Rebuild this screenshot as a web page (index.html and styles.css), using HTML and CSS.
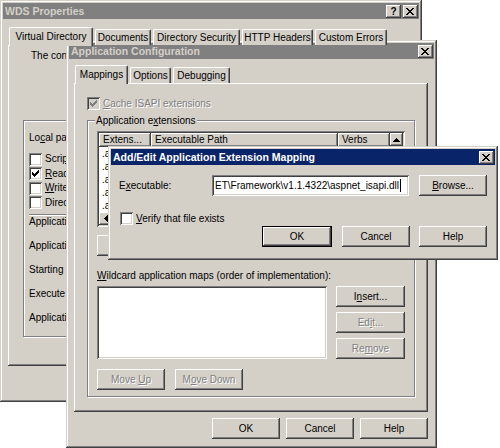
FILE: index.html
```html
<!DOCTYPE html>
<html>
<head>
<meta charset="utf-8">
<title>WDS Properties</title>
<link rel="stylesheet" href="styles.css">
</head>
<body>

<div class="win wds">
  <div class="title">
    <span class="ttext">WDS Properties</span>
    <span class="tbtn raised qmark">?</span>
    <span class="tbtn raised"><svg class="xg" width="8" height="7" viewBox="0 0 8 7"><path d="M0 0h2v1h-2z M6 0h2v1h-2z M1 1h2v1h-2z M5 1h2v1h-2z M2 2h4v1h-4z M3 3h2v1h-2z M2 4h4v1h-4z M1 5h2v1h-2z M5 5h2v1h-2z M0 6h2v1h-2z M6 6h2v1h-2z" fill="#000"/></svg></span>
  </div>
  <div class="tabs">
    <div class="tab sel t-vd">Virtual Directory</div>
    <div class="tab t-doc">Documents</div>
    <div class="tab t-ds">Directory Security</div>
    <div class="tab t-http">HTTP Headers</div>
    <div class="tab t-ce">Custom Errors</div>
  </div>
  <div class="panel wds-panel">
    <div class="wds-intro">The content for this resource should come from:</div>
    <div class="group wds-group">
      <div class="lp">Lo<u>c</u>al path:</div>
      <div class="chklist">
        <div class="chkrow"><span class="chk"></span><span>Scri<u>p</u>t source access</span></div>
        <div class="chkrow"><span class="chk"><svg width="13" height="13" viewBox="0 0 13 13"><path d="M3 5h1v3h-1z M4 6h1v3h-1z M5 7h1v3h-1z M6 6h1v3h-1z M7 5h1v3h-1z M8 4h1v3h-1z M9 3h1v3h-1z" fill="#000"/></svg></span><span><u>R</u>ead</span></div>
        <div class="chkrow"><span class="chk"></span><span><u>W</u>rite</span></div>
        <div class="chkrow"><span class="chk"></span><span>Directory <u>b</u>rowsing</span></div>
      </div>
      <div class="sep"></div>
      <div class="appset">Application settings</div>
      <div class="appset">Application name:</div>
      <div class="appset">Starting point:</div>
      <div class="appset">Execute permissions:</div>
      <div class="appset">Application pool:</div>
    </div>
  </div>
</div>

<div class="win cfg">
  <div class="title">
    <span class="ttext">Application Configuration</span>
    <span class="tbtn raised"><svg class="xg" width="8" height="7" viewBox="0 0 8 7"><path d="M0 0h2v1h-2z M6 0h2v1h-2z M1 1h2v1h-2z M5 1h2v1h-2z M2 2h4v1h-4z M3 3h2v1h-2z M2 4h4v1h-4z M1 5h2v1h-2z M5 5h2v1h-2z M0 6h2v1h-2z M6 6h2v1h-2z" fill="#000"/></svg></span>
  </div>
  <div class="tabs">
    <div class="tab sel t-map">Mappings</div>
    <div class="tab t-opt">Options</div>
    <div class="tab t-dbg">Debugging</div>
  </div>
  <div class="panel cfg-panel">
    <div class="chkrow cache"><span class="chk dis"><svg width="13" height="13" viewBox="0 0 13 13"><path d="M3 5h1v3h-1z M4 6h1v3h-1z M5 7h1v3h-1z M6 6h1v3h-1z M7 5h1v3h-1z M8 4h1v3h-1z M9 3h1v3h-1z" fill="#808080"/></svg></span><span class="dis-text"><u>C</u>ache ISAPI extensions</span></div>
    <div class="group ext-group">
      <span class="glabel">Application e<u>x</u>tensions</span>
      <div class="listview sunken">
        <div class="lv-main">
          <div class="lv-head">
            <span class="hcell raised c1">Extens...</span>
            <span class="hcell raised c2">Executable Path</span>
            <span class="hcell raised c3">Verbs</span>
          </div>
          <div class="lv-rows">
            <div class="lv-row"><span class="c1">.asa</span><span class="c2">C:\WINDOWS\system32\inetsrv\asp.dll</span><span class="c3">GET,HEAD</span></div>
            <div class="lv-row"><span class="c1">.asax</span><span class="c2">C:\WINDOWS\Microsoft.NET\Fra...</span><span class="c3">GET,HEAD</span></div>
            <div class="lv-row"><span class="c1">.ascx</span><span class="c2">C:\WINDOWS\Microsoft.NET\Fra...</span><span class="c3">GET,HEAD</span></div>
            <div class="lv-row"><span class="c1">.ashx</span><span class="c2">C:\WINDOWS\Microsoft.NET\Fra...</span><span class="c3">GET,HEAD</span></div>
            <div class="lv-row"><span class="c1">.asmx</span><span class="c2">C:\WINDOWS\Microsoft.NET\Fra...</span><span class="c3">GET,HEAD</span></div>
          </div>
          <div class="hscroll">
            <span class="sbtn raised"><svg width="4" height="7" viewBox="0 0 4 7"><path d="M0 3h1v1h-1z M1 2h1v3h-1z M2 1h1v5h-1z M3 0h1v7h-1z" fill="#000"/></svg></span>
            <span class="strack"></span>
            <span class="sbtn raised"><svg width="4" height="7" viewBox="0 0 4 7"><path d="M3 3h1v1h-1z M2 2h1v3h-1z M1 1h1v5h-1z M0 0h1v7h-1z" fill="#000"/></svg></span>
          </div>
        </div>
        <div class="vscroll">
          <span class="sbtn raised"><svg width="7" height="4" viewBox="0 0 7 4"><path d="M3 0h1v1h-1z M2 1h3v1h-3z M1 2h5v1h-5z M0 3h7v1h-7z" fill="#000"/></svg></span>
          <span class="strack"></span>
          <span class="sbtn raised"><svg width="7" height="4" viewBox="0 0 7 4"><path d="M0 0h7v1h-7z M1 1h5v1h-5z M2 2h3v1h-3z M3 3h1v1h-1z" fill="#000"/></svg></span>
          <span class="corner"></span>
        </div>
      </div>
      <div class="btnrow">
        <button class="btn raised"><span>A<u>d</u>d...</span></button>
        <button class="btn raised"><span><u>E</u>dit...</span></button>
        <button class="btn raised"><span><u>R</u>emove</span></button>
      </div>
      <div class="wlabel"><u>W</u>ildcard application maps (order of implementation):</div>
      <div class="wrow">
        <div class="wlist sunken"></div>
        <div class="wbtns">
          <button class="btn raised"><span>I<u>n</u>sert...</span></button>
          <button class="btn raised dis-text"><span>Ed<u>i</u>t...</span></button>
          <button class="btn raised dis-text"><span>Re<u>m</u>ove</span></button>
        </div>
      </div>
      <div class="moverow">
        <button class="btn raised dis-text"><span>Move <u>U</u>p</span></button>
        <button class="btn raised dis-text"><span>M<u>o</u>ve Down</span></button>
      </div>
    </div>
  </div>
  <div class="footer">
    <button class="btn raised"><span>OK</span></button>
    <button class="btn raised"><span>Cancel</span></button>
    <button class="btn raised"><span>Help</span></button>
  </div>
</div>

<div class="win dlg">
  <div class="title active">
    <span class="ttext">Add/Edit Application Extension Mapping</span>
    <span class="tbtn raised"><svg class="xg" width="8" height="7" viewBox="0 0 8 7"><path d="M0 0h2v1h-2z M6 0h2v1h-2z M1 1h2v1h-2z M5 1h2v1h-2z M2 2h4v1h-4z M3 3h2v1h-2z M2 4h4v1h-4z M1 5h2v1h-2z M5 5h2v1h-2z M0 6h2v1h-2z M6 6h2v1h-2z" fill="#000"/></svg></span>
  </div>
  <div class="dlg-body">
    <div class="exe-row">
      <span class="exe-label">E<u>x</u>ecutable:</span>
      <div class="field sunken"><span>ET\Framework\v1.1.4322\aspnet_isapi.dll</span><span class="caret"></span></div>
      <button class="btn raised browse"><span><u>B</u>rowse...</span></button>
    </div>
    <div class="chkrow verify"><span class="chk"></span><span><u>V</u>erify that file exists</span></div>
    <div class="dlg-btns">
      <button class="btn default ok"><span>OK</span></button>
      <button class="btn raised cancel"><span>Cancel</span></button>
      <button class="btn raised"><span>Help</span></button>
    </div>
  </div>
</div>

</body>
</html>
```

FILE: styles.css
```css
* { box-sizing: border-box; }
html, body { margin: 0; padding: 0; }
body {
  width: 500px;
  height: 448px;
  position: relative;
  overflow: hidden;
  background: #fff;
  font-family: "Liberation Sans", Arial, sans-serif;
  font-size: 10px;
  line-height: 12px;
  color: #000;
}
u { text-decoration: underline; text-underline-offset: 1px; }
svg { display: block; }

/* 3D edges */
.raised {
  background: #d4d0c8;
  box-shadow: inset -1px -1px #404040, inset 1px 1px #fff, inset -2px -2px #808080, inset 2px 2px #d4d0c8;
}
.sunken {
  background: #fff;
  box-shadow: inset 1px 1px #808080, inset -1px -1px #fff, inset 2px 2px #404040, inset -2px -2px #d4d0c8;
}
.dis-text { color: #808080; text-shadow: 1px 1px 0 #fff; }

/* windows */
.win {
  position: absolute;
  display: flex;
  flex-direction: column;
  padding: 3px;
  background: #d4d0c8;
  box-shadow: inset -1px -1px #404040, inset 1px 1px #d4d0c8, inset -2px -2px #808080, inset 2px 2px #fff;
}
.wds { left: 0; top: 0; width: 422px; height: 402px; }
.cfg { left: 66px; top: 40px; width: 371px; height: 408px; }
.dlg { left: 108px; top: 146px; width: 390px; height: 114px; }

.title {
  flex: none;
  height: 16px;
  display: flex;
  align-items: center;
  padding: 0 1px 0 2px;
  background: #808080;
  color: #d4d0c8;
  font-weight: bold;
  font-size: 10.5px;
}
.title.active { background: #0a246a; color: #fff; }
.ttext { flex: 1; white-space: nowrap; overflow: hidden; }
.tbtn {
  flex: none;
  width: 15px;
  height: 13px;
  display: flex;
  align-items: center;
  justify-content: center;
  color: #000;
}
.tbtn + .tbtn { margin-left: 2px; }
.qmark { font-size: 10px; font-weight: bold; padding-top: 1px; }
.xg { margin-left: -1px; }

/* tabs */
.tabs {
  flex: none;
  display: flex;
  align-items: flex-end;
  height: 18px;
  margin-left: 6px;
  position: relative;
  z-index: 1;
}
.wds .tabs { margin-top: 8px; }
.cfg .tabs { margin-top: 6px; }
.tab {
  flex: none;
  height: 16px;
  margin-right: 2px;
  display: flex;
  align-items: center;
  justify-content: center;
  white-space: nowrap;
  background: #d4d0c8;
  border-top: 1px solid #fff;
  border-left: 1px solid #fff;
  border-right: 1px solid #404040;
  border-radius: 2px 2px 0 0;
  box-shadow: inset -1px 0 #808080;
}
.tab.sel { height: 19px; margin-bottom: -1px; padding-bottom: 1px; }
.t-vd { width: 84px; }
.t-doc { width: 56px; }
.t-ds { width: 87px; }
.t-http { width: 71px; }
.t-ce { width: 72px; }
.t-map { width: 53px; }
.t-opt { width: 41px; }
.t-dbg { width: 57px; }

.panel {
  flex: none;
  display: flex;
  flex-direction: column;
  align-items: flex-start;
  margin-left: 5px;
  background: #d4d0c8;
  box-shadow: inset -1px -1px #404040, inset 1px 1px #fff, inset -2px -2px #808080;
}
.wds-panel { width: 406px; height: 321px; }
.cfg-panel { width: 354px; height: 329px; }

/* group boxes */
.group {
  position: relative;
  flex: none;
  border: 1px solid #808080;
  box-shadow: inset 1px 1px #fff, 1px 1px #fff;
}
.glabel {
  position: absolute;
  left: 7px;
  top: -6px;
  padding: 0 1px;
  background: #d4d0c8;
  white-space: nowrap;
}

/* WDS panel */
.wds-intro { margin: 5px 0 0 23px; white-space: nowrap; }
.wds-group { margin: 58px 0 0 15px; width: 378px; height: 217px; padding: 11px 5px 0; }
.lp { white-space: nowrap; }
.chklist { margin-top: 8px; }
.chkrow { display: flex; align-items: center; white-space: nowrap; }
.chklist .chkrow { height: 14.5px; }
.chk {
  flex: none;
  width: 13px;
  height: 13px;
  margin-right: 3px;
  background: #fff;
  box-shadow: inset 1px 1px #808080, inset -1px -1px #fff, inset 2px 2px #404040, inset -2px -2px #d4d0c8;
}
.chk.dis { background: #d4d0c8; }
.sep { margin-top: 4px; height: 2px; border-top: 1px solid #808080; border-bottom: 1px solid #fff; }
.appset { white-space: nowrap; }
.appset + .appset { margin-top: 12px; }

/* App config panel */
.cache { margin: 14px 0 0 13px; height: 13px; }
.ext-group { margin: 10px 0 0 13px; width: 328px; height: 277px; padding: 10px 9px 0; }

.listview {
  display: flex;
  width: 308px;
  height: 96px;
  padding: 2px;
}
.lv-main { flex: 1; min-width: 0; display: flex; flex-direction: column; }
.lv-head { flex: none; display: flex; height: 14px; }
.hcell { flex: none; display: flex; align-items: center; padding-left: 4px; white-space: nowrap; overflow: hidden; }
.c1 { width: 52px; }
.c2 { width: 187px; }
.c3 { width: 52px; }
.lv-rows { flex: 1; overflow: hidden; }
.lv-row { display: flex; height: 13px; align-items: center; white-space: nowrap; }
.lv-row span { flex: none; padding-left: 3px; overflow: hidden; text-overflow: ellipsis; }
.hscroll { flex: none; display: flex; height: 13px; }
.vscroll { flex: none; width: 13px; display: flex; flex-direction: column; }
.sbtn { flex: none; width: 13px; height: 13px; display: flex; align-items: center; justify-content: center; }
.strack { flex: 1; background: repeating-conic-gradient(#fff 0 25%, #d4d0c8 0 50%) 0 0 / 2px 2px; }
.corner { flex: none; height: 13px; background: #d4d0c8; }

.btn {
  flex: none;
  width: 68px;
  height: 21px;
  border: 0;
  padding: 0;
  margin: 0;
  font: inherit;
  color: inherit;
  display: flex;
  align-items: center;
  justify-content: center;
  white-space: nowrap;
}
.btn.dis-text { color: #808080; }
.btnrow { display: flex; gap: 6px; margin-top: 8px; }
.wlabel { margin: 14px 0 4px; white-space: nowrap; }
.wrow { display: flex; height: 73px; }
.wlist { width: 231px; height: 73px; }
.wbtns { margin-left: 9px; display: flex; flex-direction: column; gap: 5px; }
.wbtns .btn { width: 69px; }
.moverow { display: flex; gap: 10px; margin-top: 10px; }

.footer { flex: none; display: flex; justify-content: flex-end; gap: 6px; margin-top: 6px; padding-right: 6px; }

/* Add/Edit dialog */
.dlg-body { padding: 10px 8px 0; }
.exe-row { display: flex; align-items: center; height: 21px; }
.exe-label { flex: none; width: 93px; white-space: nowrap; }
.field {
  flex: none;
  width: 197px;
  height: 21px;
  display: flex;
  align-items: center;
  padding: 0 3px;
  white-space: nowrap;
  overflow: hidden;
}
.caret { flex: none; width: 1px; height: 13px; margin-left: 1px; background: #000; }
.browse { margin-left: 10px; }
.verify { margin: 16px 0 0 1px; height: 13px; }
.dlg-btns { display: flex; justify-content: flex-end; margin-top: 1px; }
.btn.default {
  background: #d4d0c8;
  box-shadow: inset 0 0 0 1px #000, inset -2px -2px #404040, inset 2px 2px #fff, inset -3px -3px #808080;
}
.ok { width: 70px; margin-right: 10px; }
.cancel { margin-right: 9px; }
```
